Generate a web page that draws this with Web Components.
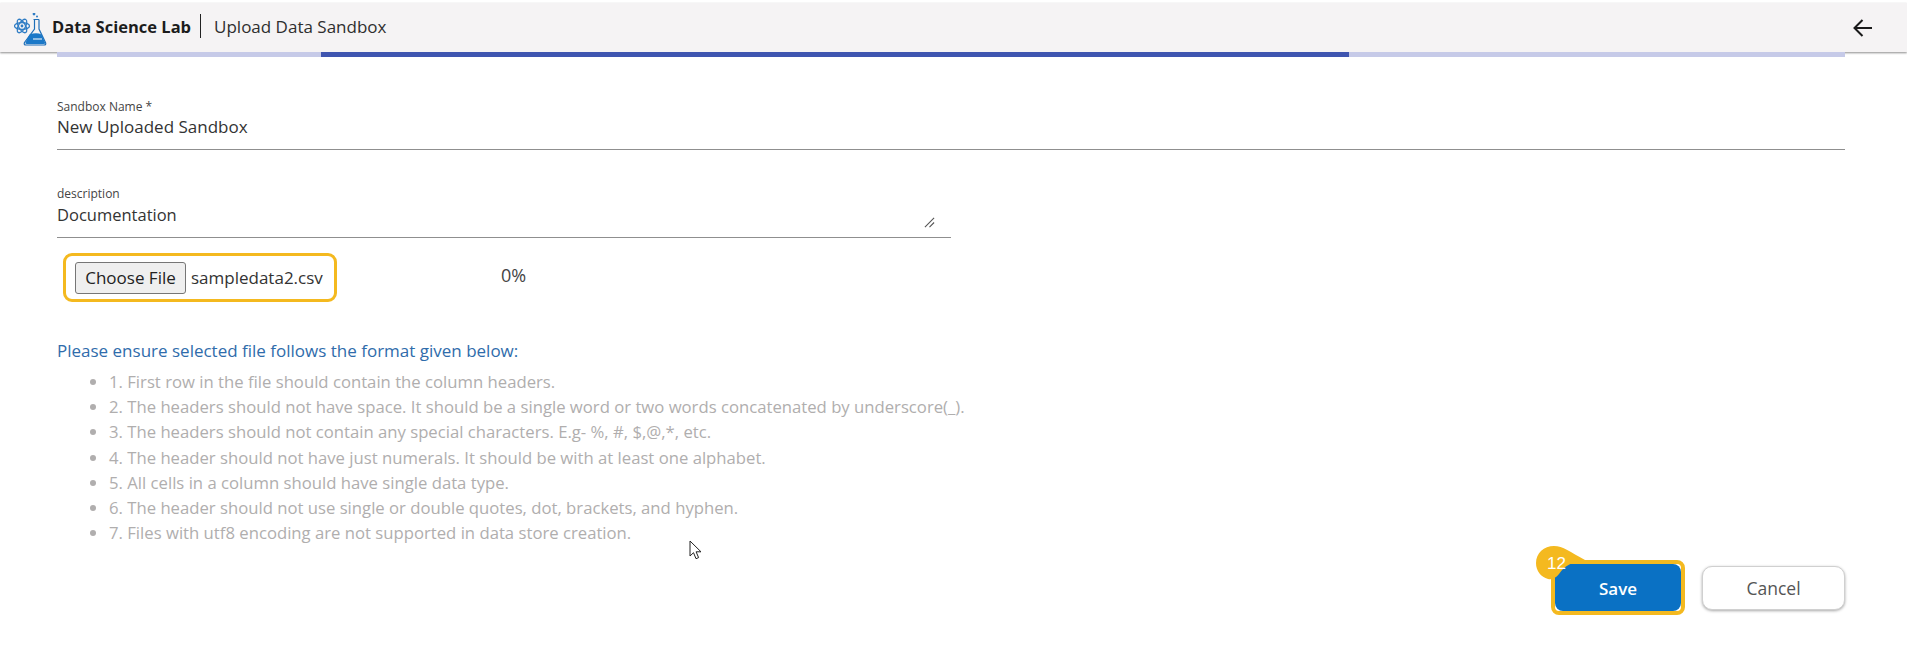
<!DOCTYPE html>
<html lang="en">
<head>
<meta charset="utf-8">
<title>Upload Data Sandbox</title>
<style>
  html, body { margin: 0; height: 100%; background: #fff; overflow: hidden; }
  body { font-family: "Open Sans", "Noto Sans", sans-serif; color: #2f2f2f; padding-top: 3px; box-sizing: border-box; }
</style>
</head>
<body>
<app-header brand="Data Science Lab" page="Upload Data Sandbox"></app-header>
<step-progress></step-progress>
<upload-form>
  <text-field label="Sandbox Name *" value="New Uploaded Sandbox"></text-field>
  <text-field class="desc" label="description" value="Documentation" grip></text-field>
  <file-row filename="sampledata2.csv" percent="0%"></file-row>
  <format-notes title="Please ensure selected file follows the format given below:">
    <li>1. First row in the file should contain the column headers.</li>
    <li>2. The headers should not have space. It should be a single word or two words concatenated by underscore(_).</li>
    <li>3. The headers should not contain any special characters. E.g- %, #, $,@,*, etc.</li>
    <li>4. The header should not have just numerals. It should be with at least one alphabet.</li>
    <li>5. All cells in a column should have single data type.</li>
    <li>6. The header should not use single or double quotes, dot, brackets, and hyphen.</li>
    <li>7. Files with utf8 encoding are not supported in data store creation.</li>
  </format-notes>
  <form-actions step="12"></form-actions>
</upload-form>
<mouse-cursor></mouse-cursor>

<script>
// Barra superior con logo, nombre del producto y flecha de volver
class AppHeader extends HTMLElement {
  constructor() {
    super();
    this.attachShadow({mode: 'open'});
  }
  connectedCallback() {
    this.shadowRoot.innerHTML = `
      <style>
        :host { display: flex; align-items: center; height: 49px; background: #f5f3f4; box-shadow: 0 1px 2px rgba(0,0,0,.45); position: relative; }
        svg.logo { width: 34px; height: 34px; margin-left: 14px; flex: none; margin-top: 5px; }
        .brand { font-weight: 700; font-size: 16.500px; color: #1c1c1c; margin-left: 4px; margin-top: -3px; }
        .sep { width: 1px; height: 24px; background: #222; margin: -3px 13px 0 9px; }
        .page { font-size: 17px; color: #2e2e2e; margin-top: -3px; }
        .back { margin-left: auto; margin-right: 33px; width: 22px; height: 22px; }
      </style>
      <svg class="logo" viewBox="0 0 34 34" fill="none">
        <g stroke="#2f7cc4" stroke-width="1.3">
          <ellipse cx="8" cy="13" rx="7.500" ry="3.400"/>
          <ellipse cx="8" cy="13" rx="7.500" ry="3.400" transform="rotate(60 8 13)"/>
          <ellipse cx="8" cy="13" rx="7.500" ry="3.400" transform="rotate(120 8 13)"/>
        </g>
        <circle cx="8" cy="13" r="1.4" fill="#2f7cc4"/>
        <circle cx="20" cy="1" r="1.4" fill="#2f7cc4"/>
        <circle cx="23" cy="3.500" r="1" fill="#2f7cc4"/>
        <path d="M19.500 6.500h5.500M20.500 6.500v9.500L10.500 29.500q-1 2.500 1.500 2.500h18q2.500 0 1.500-2.500L25 16V6.500" stroke="#1f6fb8" stroke-width="1.200"/>
        <path d="M15.500 21.500q7-2.500 12 0l3.500 8q.6 1.500-1.500 1.500H13q-2 0-1.500-1.500z" fill="#1b78c8"/>
        <path d="M19 26h9" stroke="#fff" stroke-width="1"/>
      </svg>
      <span class="brand">${this.getAttribute('brand')}</span>
      <span class="sep"></span>
      <span class="page">${this.getAttribute('page')}</span>
      <svg class="back" viewBox="0 0 22 22" fill="none" stroke="#1a1a1a" stroke-width="2">
        <path d="M20 11H2.500M10.500 3l-8 8 8 8"/>
      </svg>
    `;
  }
}
customElements.define('app-header', AppHeader);

// Franja de progreso bajo la cabecera
class StepProgress extends HTMLElement {
  constructor() {
    super();
    this.attachShadow({mode: 'open'}).innerHTML = `
      <style>
        :host { display: grid; grid-template-columns: 264px 1028px 1fr; height: 5px; margin: 0 62px 0 57px; position: relative; }
        .light { background: #c6cae8; }
        .dark { background: #3f55b0; }
      </style>
      <div class="light"></div><div class="dark"></div><div class="light"></div>
    `;
  }
}
customElements.define('step-progress', StepProgress);

class UploadForm extends HTMLElement {
  constructor() {
    super();
    this.attachShadow({mode: 'open'}).innerHTML = `
      <style>
        :host { display: flex; flex-direction: column; padding: 43px 62px 0 57px; }
      </style>
      <slot></slot>
    `;
  }
}
customElements.define('upload-form', UploadForm);

// Campo de formulario con etiqueta pequeña y línea inferior
class TextField extends HTMLElement {
  constructor() {
    super();
    this.attachShadow({mode: 'open'});
  }
  connectedCallback() {
    const grip = this.hasAttribute('grip')
      ? `<svg class="grip" viewBox="0 0 12 12" fill="none" stroke="#555" stroke-width="1.200"><path d="M1 11 11 1M6 11l5-5"/></svg>`
      : '';
    this.shadowRoot.innerHTML = `
      <style>
        :host { display: block; position: relative; border-bottom: 1px solid #8f8f8f; height: 49px; }
        :host(.desc) { width: 894px; margin-top: 37px; height: 50px; }
        .label { font-size: 12px; line-height: 14px; color: #444; }
        .value { font-size: 17px; line-height: 22px; color: #333; margin-top: 2px; }
        :host(.desc) .value { font-size: 16.500px; margin-top: 3px; }
        .grip { position: absolute; right: 16px; bottom: 9px; width: 11px; height: 11px; }
      </style>
      <div class="label">${this.getAttribute('label')}</div>
      <div class="value">${this.getAttribute('value')}</div>
      ${grip}
    `;
  }
}
customElements.define('text-field', TextField);

// Selector de archivo resaltado y porcentaje de subida
class FileRow extends HTMLElement {
  constructor() {
    super();
    this.attachShadow({mode: 'open'});
  }
  connectedCallback() {
    this.shadowRoot.innerHTML = `
      <style>
        :host { display: flex; align-items: center; margin: 15px 0 0 6px; }
        .mark { display: flex; align-items: center; gap: 5px; box-sizing: border-box; width: 274px; height: 49px; border: 3.500px solid #f4b91f; border-radius: 9px; padding-left: 9px; }
        button { font: 17px "Open Sans", "Noto Sans", sans-serif; color: #222; width: 111px; height: 32px; padding: 0; background: #efefef; border: 1px solid #767676; border-radius: 3px; }
        .name { font-size: 17px; color: #333; }
        .pct { font-size: 18px; color: #444; margin-left: 164px; margin-top: -6px; }
      </style>
      <div class="mark"><button type="button">Choose File</button><span class="name">${this.getAttribute('filename')}</span></div>
      <span class="pct">${this.getAttribute('percent')}</span>
    `;
  }
}
customElements.define('file-row', FileRow);

class FormatNotes extends HTMLElement {
  constructor() {
    super();
    this.attachShadow({mode: 'open'});
  }
  connectedCallback() {
    this.shadowRoot.innerHTML = `
      <style>
        :host { display: block; margin-top: 38px; }
        .title { font-size: 17px; line-height: 22px; color: #2f6cab; }
        ul { margin: 7px 0 0; padding-left: 52px; font-size: 16.700px; line-height: 25.200px; color: #b0aeae; }
        ::slotted(li) { padding: 0; }
      </style>
      <div class="title">${this.getAttribute('title')}</div>
      <ul><slot></slot></ul>
    `;
  }
}
customElements.define('format-notes', FormatNotes);

// Marca numerada del paso, se coloca sobre el botón
class StepBadge extends HTMLElement {
  constructor() {
    super();
    this.attachShadow({mode: 'open'}).innerHTML = `
      <style>
        :host { position: absolute; left: -19px; top: -18px; width: 49px; height: 34px; display: block; }
        svg { position: absolute; inset: 0; width: 49px; height: 34px; }
        span { position: absolute; left: 11px; top: 8px; font: 17px/20px "Liberation Sans", sans-serif; color: #fff; }
      </style>
      <svg viewBox="0 0 49 34"><path d="M0 17C0 7 8 0 18 0c9 0 16 6 31 14-13 2-20 5-26 14-3 4-7 6-11 5C5 31 0 25 0 17z" fill="#f4b91f"/></svg>
      <span><slot></slot></span>
    `;
  }
}
customElements.define('step-badge', StepBadge);

class FormActions extends HTMLElement {
  constructor() {
    super();
    this.attachShadow({mode: 'open'});
  }
  connectedCallback() {
    this.shadowRoot.innerHTML = `
      <style>
        :host { display: flex; justify-content: flex-end; align-items: center; gap: 17px; margin-top: 15px; }
        .mark { position: relative; box-sizing: border-box; width: 134px; height: 55px; border: 4px solid #f4b91f; border-radius: 8px; display: flex; }
        button { font: 17px "Open Sans", "Noto Sans", sans-serif; width: 100%; border-radius: 8px; padding: 0 0 0 0; }
        .save { background: #0a71c4; color: #fff; border: 0; font-weight: 600; padding-top: 2px; }
        .cancel { width: 143px; height: 44px; background: #fff; color: #555; border: 1px solid #d0d0d0; box-shadow: 0 1px 3px rgba(0,0,0,.35); border-radius: 10px; font-size: 17.500px; }
      </style>
      <div class="mark">
        <step-badge>${this.getAttribute('step')}</step-badge>
        <button class="save" type="button">Save</button>
      </div>
      <button class="cancel" type="button">Cancel</button>
    `;
  }
}
customElements.define('form-actions', FormActions);

// Puntero del ratón que aparece en la captura
class MouseCursor extends HTMLElement {
  constructor() {
    super();
    this.attachShadow({mode: 'open'}).innerHTML = `
      <style>
        :host { position: absolute; left: 689px; top: 540px; width: 14px; height: 20px; display: block; }
        svg { width: 14px; height: 20px; display: block; }
      </style>
      <svg viewBox="0 0 14 20"><path d="M1 1v15l3.500-3.300 2.500 6 2.600-1.100-2.500-5.800H12z" fill="#fff" stroke="#222" stroke-width="1"/></svg>
    `;
  }
}
customElements.define('mouse-cursor', MouseCursor);
</script>
</body>
</html>
